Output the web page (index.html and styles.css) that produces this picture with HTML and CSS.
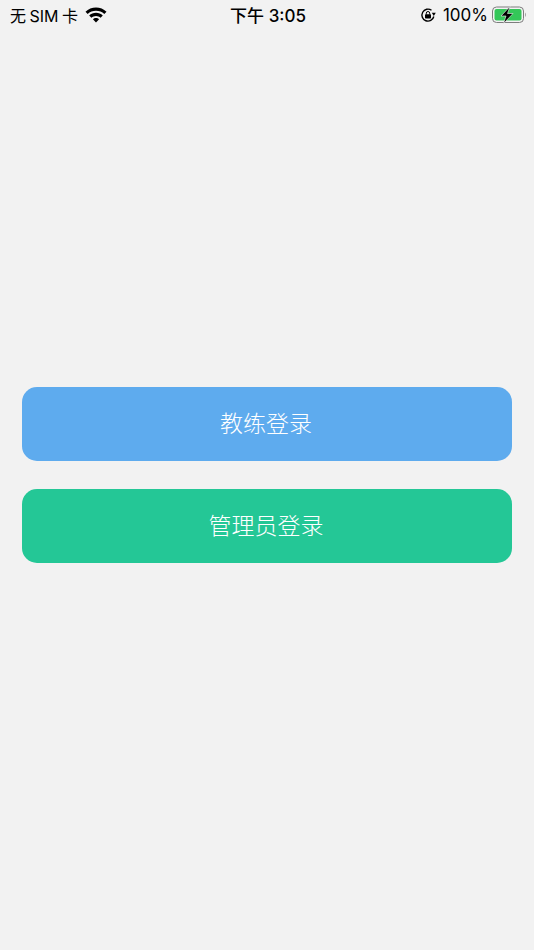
FILE: index.html
```html
<!DOCTYPE html>
<html lang="zh-CN">
<head>
    <meta charset="UTF-8">
    <meta name="viewport" content="width=device-width, initial-scale=1.0">
    <title>登录</title>
    <link rel="stylesheet" href="styles.css">
</head>
<body>
    <div class="status-bar">
        <div class="status-left">
            <span class="carrier">无 SIM 卡</span>
            <svg class="wifi" width="22" height="16" viewBox="0 0 22 16">
                <path d="M11 .5c4 0 7.700 1.600 10.500 4.200l-2.200 2.300C17.100 5 14.200 3.800 11 3.800S4.900 5 2.700 7L.5 4.700C3.300 2.100 7 .5 11 .5z" fill="#000"/>
                <path d="M11 5.800c2.600 0 5 1 6.800 2.700l-2.200 2.300c-1.200-1.100-2.800-1.800-4.600-1.800s-3.400.7-4.600 1.800L4.200 8.500C6 6.800 8.400 5.800 11 5.800z" fill="#000"/>
                <path d="M11 11c1.200 0 2.300.5 3.100 1.200L11 15.500l-3.100-3.300c.8-.7 1.900-1.200 3.100-1.200z" fill="#000"/>
            </svg>
        </div>
        <div class="status-time">下午 3:05</div>
        <div class="status-right">
            <svg class="lock" width="16" height="16" viewBox="0 0 16 16">
                <path d="M13.800 9.500A6 6 0 1 1 11.500 3.300" fill="none" stroke="#000" stroke-width="1.400"/>
                <path d="M11.800 5.800h4L13.800 9z" fill="#000"/>
                <rect x="5" y="7.200" width="6" height="4.300" rx=".7" fill="#000"/>
                <path d="M6.300 7.500V6.200a1.700 1.700 0 0 1 3.400 0v1.300" fill="none" stroke="#000" stroke-width="1"/>
            </svg>
            <span class="battery-text">100%</span>
            <svg class="battery" width="34" height="18" viewBox="0 0 34 18">
                <rect x=".5" y="1" width="31" height="15.500" rx="4" fill="none" stroke="#7d7d7d"/>
                <rect x="2.500" y="3" width="27" height="11.500" rx="2" fill="#34c759"/>
                <path d="M33 6.500v4.500c.6-.4 1-1.200 1-2.200s-.4-1.900-1-2.300z" fill="#a5a5a5"/>
                <path d="M18 .5L9 10h5l-2.500 7.500L21 7.500h-5.500z" fill="#000" stroke="#f2f2f2" stroke-width=".6"/>
            </svg>
        </div>
    </div>

    <div class="login-box">
        <button class="login-btn btn-coach">教练登录</button>
        <button class="login-btn btn-admin">管理员登录</button>
    </div>
</body>
</html>
```

FILE: styles.css
```css
* {
    margin: 0;
    padding: 0;
    box-sizing: border-box;
    font-family: "Inter", "Noto Sans CJK SC", sans-serif;
}

body {
    width: 534px;
    height: 950px;
    background-color: #f2f2f2;
    overflow: hidden;
}

.status-bar {
    height: 29px;
    padding: 0 8px 0 10px;
    display: flex;
    align-items: center;
    justify-content: space-between;
    color: #000;
}

.status-left,
.status-right {
    flex: 1;
    display: flex;
    align-items: center;
}

.status-right {
    justify-content: flex-end;
}

.carrier {
    font-size: 16px;
    word-spacing: -1px;
}

.wifi {
    margin-left: 7px;
}

.status-time {
    font-size: 17px;
    font-weight: 500;
}

.lock {
    margin-right: 7px;
}

.battery-text {
    font-size: 17px;
    margin-right: 4px;
}

.login-box {
    margin-top: 358px;
    padding: 0 22px;
    display: flex;
    flex-direction: column;
    gap: 28px;
}

.login-btn {
    height: 74px;
    padding: 0 2px 5px 0;
    border: none;
    border-radius: 15px;
    color: #fff;
    font-size: 23px;
    font-weight: 300;
    text-align: center;
}

.btn-coach {
    background-color: #5eabee;
}

.btn-admin {
    background-color: #24c796;
}
```
